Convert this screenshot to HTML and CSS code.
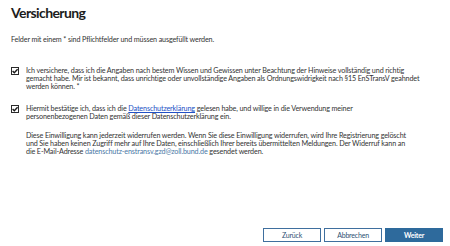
FILE: index.html
```html
<!DOCTYPE html>
<html lang="de">
<head>
<meta charset="utf-8">
<title>Versicherung</title>
<link rel="stylesheet" href="styles.css">
</head>
<body>
<main class="page">
  <h1 class="title">Versicherung</h1>
  <p class="note">Felder mit einem * sind Pflichtfelder und müssen ausgefüllt werden.</p>

  <div class="check-row first">
    <span class="box"><svg viewBox="0 0 8 8" width="8" height="8"><path d="M1.6 4.1 L3.3 5.8 L6.6 2.2" fill="none" stroke="#1a1a1a" stroke-width="1.4"/></svg></span>
    <p class="check-text">Ich versichere, dass ich die Angaben nach bestem Wissen und Gewissen unter Beachtung der Hinweise vollständig und richtig<br>gemacht habe. Mir ist bekannt, dass unrichtige oder unvollständige Angaben als Ordnungswidrigkeit nach §15 EnSTransV geahndet<br>werden können. *</p>
  </div>

  <div class="check-row second">
    <span class="box"><svg viewBox="0 0 8 8" width="8" height="8"><path d="M1.6 4.1 L3.3 5.8 L6.6 2.2" fill="none" stroke="#1a1a1a" stroke-width="1.4"/></svg></span>
    <p class="check-text">Hiermit bestätige ich, dass ich die <a class="link" href="#">Datenschutzerklärung</a> gelesen habe, und willige in die Verwendung meiner<br>personenbezogenen Daten gemäß dieser Datenschutzerklärung ein.</p>
  </div>

  <p class="info">Diese Einwilligung kann jederzeit widerrufen werden. Wenn Sie diese Einwilligung widerrufen, wird Ihre Registrierung gelöscht<br>und Sie haben keinen Zugriff mehr auf Ihre Daten, einschließlich Ihrer bereits übermittelten Meldungen. Der Widerruf kann an<br>die E-Mail-Adresse <span class="mail">datenschutz-enstransv.gzd@zoll.bund.de</span> gesendet werden.</p>

  <div class="actions">
    <button class="btn">Zurück</button>
    <button class="btn">Abbrechen</button>
    <button class="btn primary">Weiter</button>
  </div>
</main>
</body>
</html>
```

FILE: styles.css
```css
html, body {
  margin: 0;
  padding: 0;
  background: #ffffff;
}

.page {
  box-sizing: border-box;
  min-height: 100vh;
  padding: 3px 7px 4px 11px;
  display: flex;
  flex-direction: column;
  font-family: Lato, "Open Sans", sans-serif;
  color: #333333;
  font-size: 7.2px;
  line-height: 8px;
  letter-spacing: -0.13px;
}

.title {
  margin: 0;
  font-size: 14px;
  line-height: 20px;
  font-weight: 700;
  color: #1c1c1c;
  letter-spacing: -0.6px;
}

.note {
  margin: 13px 0 0;
}

.check-row {
  display: flex;
  align-items: flex-start;
  gap: 7px;
}

.check-row.first {
  margin-top: 23px;
}

.check-row.second {
  margin-top: 14px;
}

.box {
  box-sizing: border-box;
  flex: none;
  width: 8px;
  height: 8px;
  border: 1px solid #2a2a2a;
  display: flex;
  align-items: center;
  justify-content: center;
}

.box svg {
  flex: none;
}

.check-text {
  margin: 0;
  white-space: nowrap;
}

.link {
  color: #2150c4;
  text-decoration: underline;
}

.info {
  margin: 11px 0 0;
  padding-left: 15px;
  white-space: nowrap;
}

.mail {
  color: #4a78a6;
}

.actions {
  margin-top: auto;
  display: flex;
  justify-content: flex-end;
  gap: 3px;
}

.btn {
  box-sizing: border-box;
  width: 58px;
  height: 14px;
  padding: 0;
  border: 1px solid #3f6f9e;
  background: #ffffff;
  color: #2d4f73;
  font-family: Lato, "Open Sans", sans-serif;
  font-size: 7px;
  letter-spacing: -0.2px;
}

.btn.primary {
  background: #2e6a9c;
  border-color: #2e6a9c;
  color: #ffffff;
  font-weight: 700;
}
```
